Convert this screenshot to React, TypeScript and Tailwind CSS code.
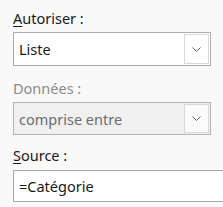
import React from "react";

function Chevron() {
  return (
    <svg width="11" height="7" viewBox="0 0 11 7" className="block">
      <path d="M1.5 1.5 L5.5 5.5 L9.5 1.5" fill="none" stroke="#606060" strokeWidth="1" />
    </svg>
  );
}

export default function App() {
  return (
    <div className="w-[223px] h-[207px] overflow-hidden bg-[#f9f9f9] pl-[13px] pt-[9px] font-['Segoe_UI','Noto_Sans',sans-serif] text-[14.5px] leading-[18px] text-[#1a1a1a]">
      <div>
        <span className="underline underline-offset-2">A</span>utoriser :
      </div>
      <div className="mt-[5px] flex h-[34px] w-[198px] items-stretch border border-[#acacac] bg-white">
        <div className="flex flex-1 items-center pl-[5px]">Liste</div>
        <div className="m-[1px] flex w-[25px] items-center justify-center border border-[#d9d9d9] bg-white">
          <Chevron />
        </div>
      </div>
      <div className="mt-[13px] text-[#8a8a8a]">Données :</div>
      <div className="mt-[5px] flex h-[33px] w-[198px] items-stretch border border-[#b4b4b4] bg-[#f0f0f0]">
        <div className="flex flex-1 items-center pl-[5px] text-[#6d6d6d]">comprise entre</div>
        <div className="m-[1px] flex w-[25px] items-center justify-center border border-[#d9d9d9] bg-[#fbfbfb]">
          <Chevron />
        </div>
      </div>
      <div className="mt-[11px]">
        <span className="underline underline-offset-2">S</span>ource :
      </div>
      <div className="mt-[6px] flex h-[32px] w-[240px] items-center border border-[#acacac] bg-white pl-[5px]">
        =Catégorie
      </div>
    </div>
  );
}
